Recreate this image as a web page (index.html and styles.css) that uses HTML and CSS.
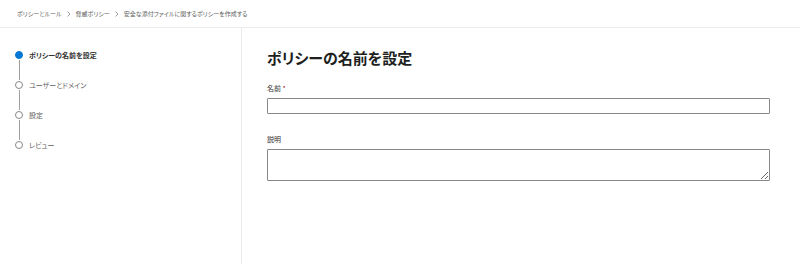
FILE: index.html
```html
<!DOCTYPE html>
<html lang="ja">
<head>
  <meta charset="UTF-8">
  <title>ポリシーの名前を設定</title>
  <link rel="stylesheet" href="styles.css">
</head>
<body>
  <div class="crumbs">
    <span>ポリシーとルール</span>
    <svg class="chev" width="4" height="6" viewBox="0 0 4 6"><path d="M0.5 0.5 L3 3 L0.5 5.5" fill="none" stroke="#8a8886" stroke-width="0.8"/></svg>
    <span>脅威ポリシー</span>
    <svg class="chev" width="4" height="6" viewBox="0 0 4 6"><path d="M0.5 0.5 L3 3 L0.5 5.5" fill="none" stroke="#8a8886" stroke-width="0.8"/></svg>
    <span>安全な添付ファイルに関するポリシーを作成する</span>
  </div>

  <div class="main">
    <div class="nav">
      <div class="step current"><span class="dot"></span><span class="label">ポリシーの名前を設定</span></div>
      <div class="line"></div>
      <div class="step"><span class="dot"></span><span class="label">ユーザーとドメイン</span></div>
      <div class="line"></div>
      <div class="step"><span class="dot"></span><span class="label">設定</span></div>
      <div class="line"></div>
      <div class="step"><span class="dot"></span><span class="label">レビュー</span></div>
    </div>

    <div class="content">
      <h1>ポリシーの名前を設定</h1>
      <label class="field-label" for="policyName">名前 <span class="req">*</span></label>
      <input id="policyName" class="text-input" type="text">
      <label class="field-label desc-label" for="policyDesc">説明</label>
      <textarea id="policyDesc" class="text-area"></textarea>
    </div>
  </div>
</body>
</html>
```

FILE: styles.css
```css
body {
  margin: 0;
  font-family: "Noto Sans CJK JP", "Noto Sans", sans-serif;
  font-feature-settings: "palt";
  color: #323130;
  background: #fff;
}

.crumbs {
  height: 27px;
  border-bottom: 1px solid #edebe9;
  padding-left: 17px;
  display: flex;
  align-items: center;
  gap: 5px;
  font-size: 6px;
  color: #605e5c;
}

.main {
  display: flex;
  height: 236px;
}

.nav {
  width: 242px;
  border-right: 1px solid #edebe9;
  padding-top: 23px;
  box-sizing: border-box;
}

.step {
  display: flex;
  align-items: center;
  height: 8px;
  padding-left: 15px;
}

.dot {
  width: 8px;
  height: 8px;
  border-radius: 50%;
  border: 1px solid #8a8886;
  box-sizing: border-box;
  background: #fff;
  flex: none;
}

.step.current .dot {
  background: #0078d4;
  border-color: #0078d4;
}

.label {
  margin-left: 6px;
  font-size: 7px;
  color: #605e5c;
  white-space: nowrap;
}

.step.current .label {
  color: #323130;
  font-weight: bold;
}

.line {
  width: 1px;
  height: 20px;
  margin: 1px 0 1px 19px;
  background: #a19f9d;
}

.content {
  flex: 1;
  padding: 20px 30px 0 25px;
  display: flex;
  flex-direction: column;
}

h1 {
  margin: 0;
  font-size: 15px;
  line-height: 20px;
  font-weight: bold;
  color: #201f1e;
}

.field-label {
  margin-top: 15px;
  font-size: 7px;
  line-height: 10px;
  color: #323130;
}

.req { color: #a4262c; }

.desc-label { margin-top: 20px; }

.text-input,
.text-area {
  margin-top: 5px;
  border: 1px solid #8a8886;
  border-radius: 1px;
  box-sizing: border-box;
  width: 100%;
  font-family: inherit;
  font-size: 8px;
  padding: 2px 6px;
}

.text-input { height: 16px; }

.text-area {
  height: 32px;
  resize: vertical;
}
```
